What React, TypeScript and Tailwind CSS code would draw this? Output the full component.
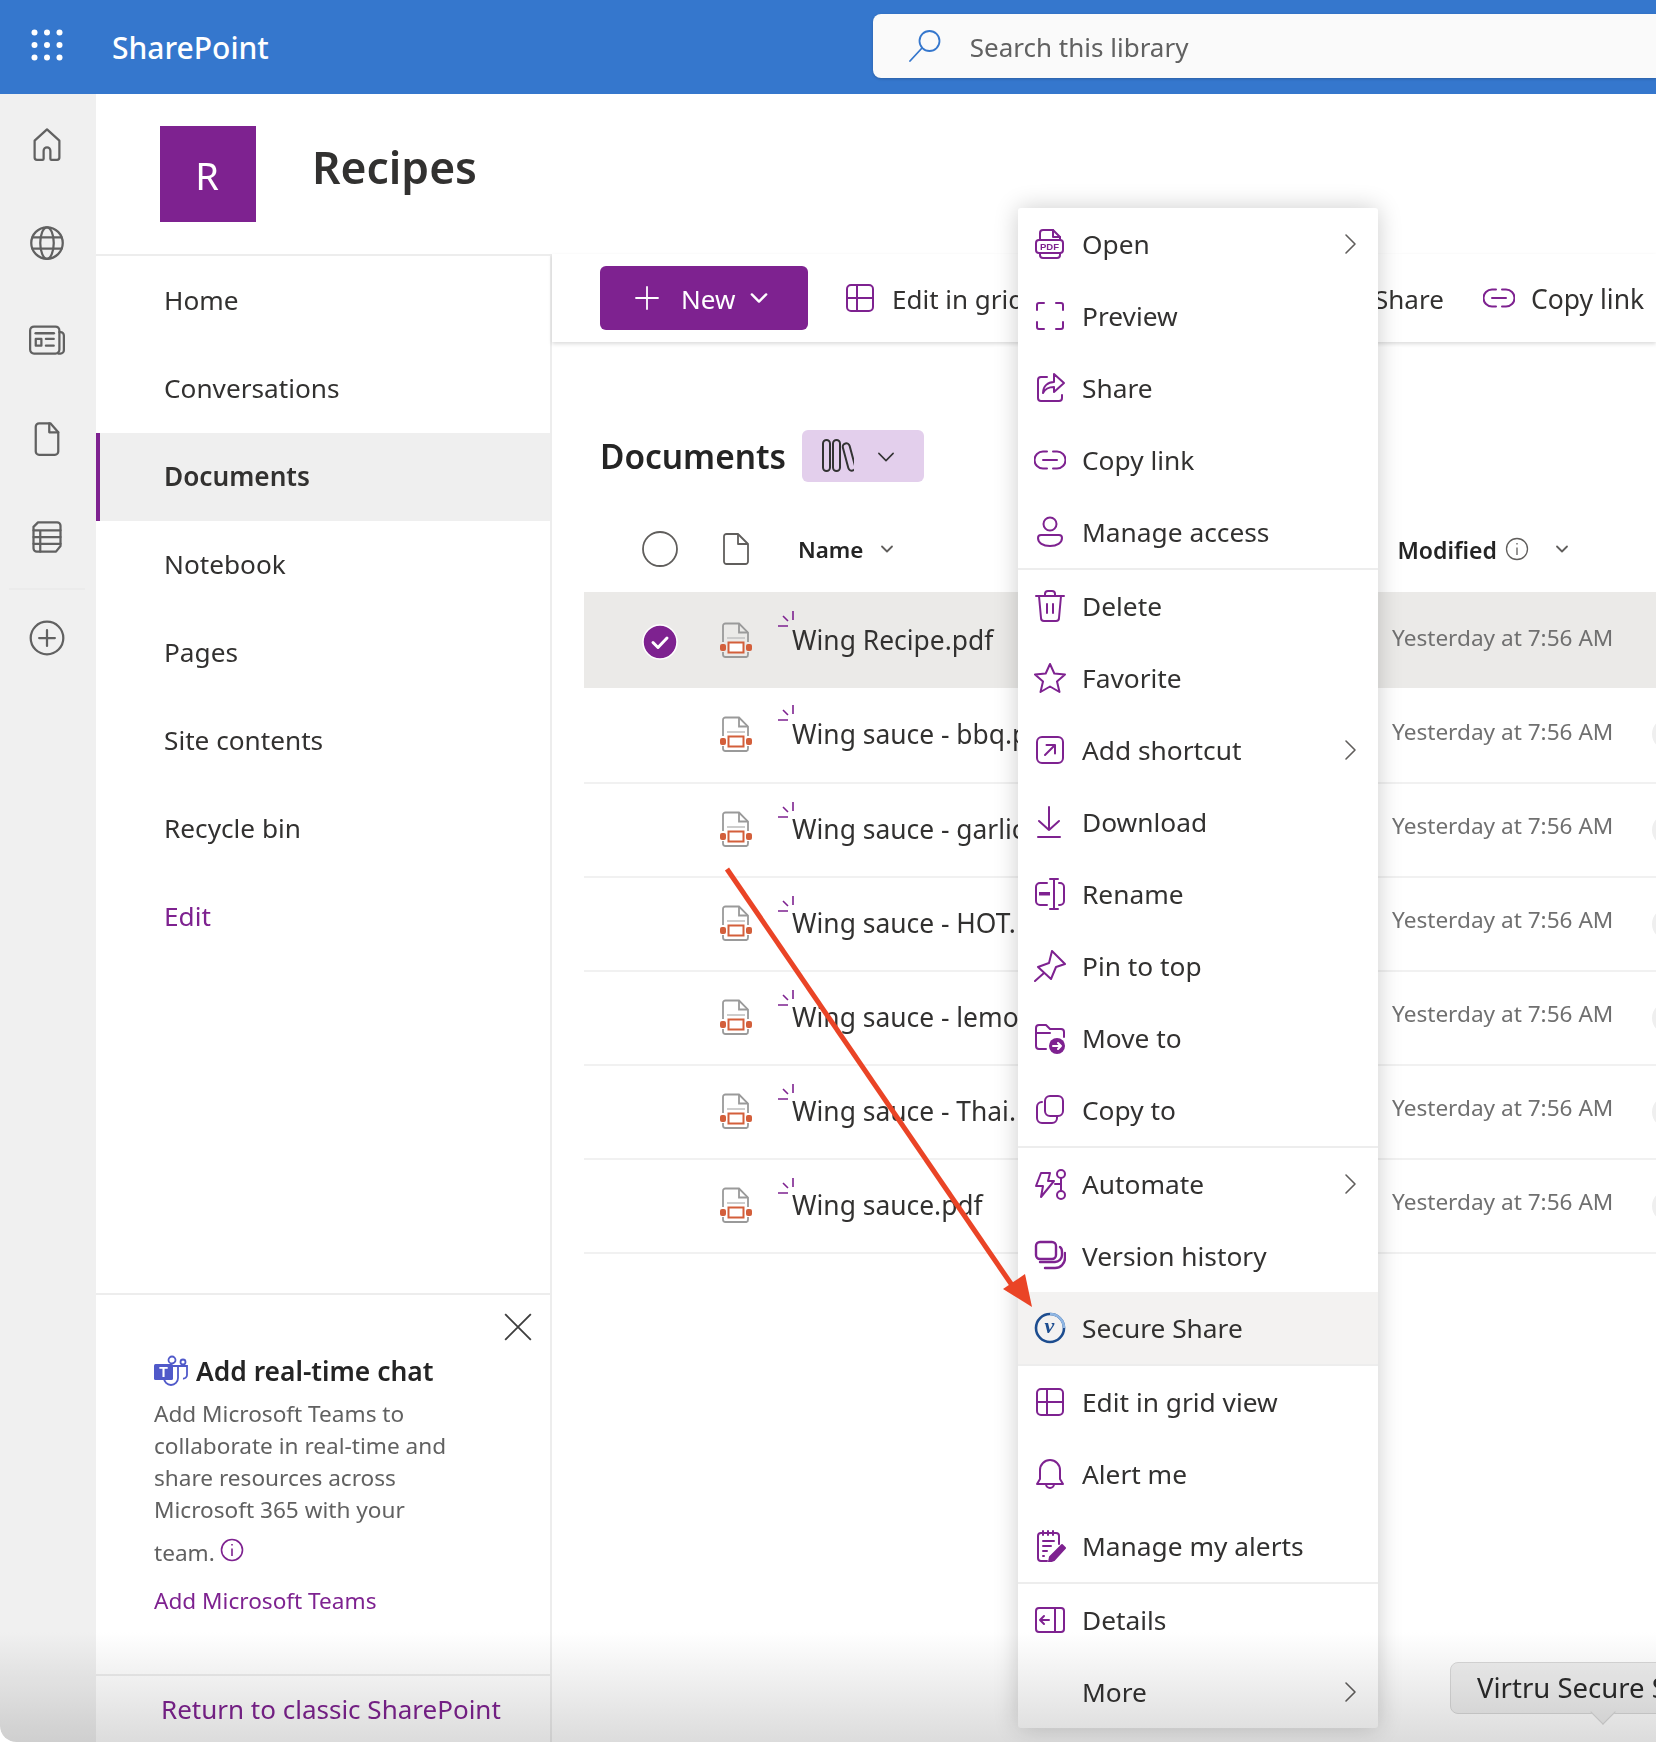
import type { ReactNode } from "react";

const purple = "#7e2290";

function Ic({ children, size = 32, className = "" }: { children: ReactNode; size?: number; className?: string }) {
  return (
    <svg width={size} height={size} viewBox="0 0 32 32" fill="none" stroke="currentColor" strokeWidth="2" strokeLinecap="round" strokeLinejoin="round" className={className}>
      {children}
    </svg>
  );
}

const LinkIcon = () => (
  <Ic>
    <path d="M13 7.5H9a8.5 8.5 0 0 0 0 17h4" />
    <path d="M19 7.5h4a8.5 8.5 0 0 1 0 17h-4" />
    <path d="M9 16h14" />
  </Ic>
);

const GridIcon = () => (
  <Ic>
    <rect x="3" y="3" width="26" height="26" rx="4" />
    <path d="M3 16h26M13 3v26" />
  </Ic>
);

const menuIcons: Record<string, ReactNode> = {
  Open: (
    <Ic>
      <path d="M6 12V5a3 3 0 0 1 3-3h10l7 7v3" />
      <path d="M19 2v7h7" />
      <rect x="2" y="12" width="27" height="13" rx="3" />
      <path d="M6 25v2a3 3 0 0 0 3 3h14a3 3 0 0 0 3-3v-2" />
      <text x="15.5" y="21.7" textAnchor="middle" fontSize="9.5" fontWeight="800" fill="currentColor" stroke="none" fontFamily="Liberation Sans">PDF</text>
    </Ic>
  ),
  Preview: (
    <Ic>
      <path d="M3 10V5a2 2 0 0 1 2-2h5M22 3h5a2 2 0 0 1 2 2v5M29 22v5a2 2 0 0 1-2 2h-5M10 29H5a2 2 0 0 1-2-2v-5" />
    </Ic>
  ),
  Share: (
    <Ic>
      <path d="M13 5H7a3 3 0 0 0-3 3v18a3 3 0 0 0 3 3h18a3 3 0 0 0 3-3v-3" />
      <path d="M20 2l10 9-10 9v-5c-5 0-9 2-11 6 0-7 5-11 11-11z" />
    </Ic>
  ),
  "Copy link": <LinkIcon />,
  "Manage access": (
    <Ic>
      <circle cx="16" cy="8" r="6.5" />
      <path d="M7 19h18a3 3 0 0 1 3 3c0 5-5 8-12 8S4 27 4 22a3 3 0 0 1 3-3z" />
    </Ic>
  ),
  Delete: (
    <Ic>
      <path d="M2 6h28M11 6V4a3 3 0 0 1 3-3h4a3 3 0 0 1 3 3v2" />
      <path d="M5 6l2 22a3 3 0 0 0 3 3h12a3 3 0 0 0 3-3l2-22" />
      <path d="M13 14v9M19 14v9" />
    </Ic>
  ),
  Favorite: (
    <Ic>
      <polygon points="16,2 20.3,11.5 31,12.5 23,19.5 25.5,30 16,24.5 6.5,30 9,19.5 1,12.5 11.7,11.5" />
    </Ic>
  ),
  "Add shortcut": (
    <Ic>
      <rect x="3" y="3" width="26" height="26" rx="5" />
      <path d="M11 21L21 11M12.5 11H21v8.5" />
    </Ic>
  ),
  Download: (
    <Ic>
      <path d="M15 1v23M5 15l10 9 10-9M4 31h22" />
    </Ic>
  ),
  Rename: (
    <Ic>
      <path d="M13 5H6a4 4 0 0 0-4 4v14a4 4 0 0 0 4 4h7M25 5h1a4 4 0 0 1 4 4v14a4 4 0 0 1-4 4h-1" />
      <path d="M20 1v30M16 1h8M16 31h8" />
      <rect x="5" y="14" width="11" height="3.5" fill="currentColor" stroke="none" />
    </Ic>
  ),
  "Pin to top": (
    <Ic>
      <path d="M18 1l13 13-9 3-5 12L4 17l11-4z" />
      <path d="M10 23L1 31" />
    </Ic>
  ),
  "Move to": (
    <Ic>
      <path d="M12 27H5a3 3 0 0 1-3-3V6a3 3 0 0 1 3-3h7l4 4h11a3 3 0 0 1 3 3v5" />
      <path d="M2 11h14" />
      <circle cx="23" cy="24" r="8" fill="currentColor" stroke="none" />
      <path d="M19 24h8M24 21l3 3-3 3" stroke="#fff" />
    </Ic>
  ),
  "Copy to": (
    <Ic>
      <rect x="11" y="2" width="18" height="20" rx="5" />
      <path d="M8 8a5 5 0 0 0-5 5v11a5 5 0 0 0 5 5h10a5 5 0 0 0 5-5v-2" />
    </Ic>
  ),
  Automate: (
    <Ic>
      <path d="M7 5h9l-2 8h6L7 29l2-11H2z" />
      <circle cx="27" cy="6" r="4" />
      <circle cx="27" cy="27" r="4" />
      <path d="M27 10v13M21 16h6" />
    </Ic>
  ),
  "Version history": (
    <Ic>
      <rect x="2" y="2" width="20" height="17" rx="4" strokeWidth="2.4" />
      <path d="M26 7c1.5 1 2 3 2 5v3a7 7 0 0 1-7 7H6" strokeWidth="2.4" />
      <path d="M31 13v5a10 10 0 0 1-10 10H11" strokeWidth="2.4" />
    </Ic>
  ),
  "Secure Share": (
    <svg width="32" height="32" viewBox="0 0 32 32" fill="none">
      <circle cx="16" cy="16" r="14" stroke="#1d4d8f" strokeWidth="2.6" />
      <path d="M16 2a14 14 0 0 1 14 14" stroke="#8fb6e3" strokeWidth="2.6" />
      <text x="15.5" y="21" textAnchor="middle" fontSize="22" fontWeight="700" fontStyle="italic" fill="#1d4d8f" fontFamily="Liberation Serif">v</text>
    </svg>
  ),
  "Edit in grid view": <GridIcon />,
  "Alert me": (
    <Ic>
      <path d="M16 2a10 10 0 0 0-10 10v9l-3 5h26l-3-5v-9A10 10 0 0 0 16 2z" />
      <path d="M12 26a4 4 0 0 0 8 0" />
    </Ic>
  ),
  "Manage my alerts": (
    <Ic>
      <path d="M13 31H7a3 3 0 0 1-3-3V6a3 3 0 0 1 3-3h15a3 3 0 0 1 3 3v8" />
      <path d="M9 1v4M14 1v4M19 1v4M9 11h11M9 16h8M9 21h4M9 26h1" />
      <path d="M28 15l3 3-11 12-5 2 1-5z" fill="currentColor" stroke="currentColor" />
    </Ic>
  ),
  Details: (
    <Ic>
      <rect x="2" y="4" width="28" height="24" rx="3" />
      <path d="M21 4v24M15 16H6M10 12l-4 4 4 4" />
    </Ic>
  ),
};

const Chevron = () => (
  <svg width="14" height="22" viewBox="0 0 14 22" fill="none" stroke="#605e5c" strokeWidth="1.6" strokeLinecap="round" strokeLinejoin="round">
    <path d="M3 2l9 9-9 9" />
  </svg>
);

const DownChevron = ({ w = 14, color = "#605e5c", sw = 1.8 }: { w?: number; color?: string; sw?: number }) => (
  <svg width={w} height={w} viewBox="0 0 14 14" fill="none" stroke={color} strokeWidth={sw} strokeLinecap="round" strokeLinejoin="round">
    <path d="M2 4.5l5 5 5-5" />
  </svg>
);

const menuSections = [
  ["Open", "Preview", "Share", "Copy link", "Manage access"],
  ["Delete", "Favorite", "Add shortcut", "Download", "Rename", "Pin to top", "Move to", "Copy to"],
  ["Automate", "Version history", "Secure Share"],
  ["Edit in grid view", "Alert me", "Manage my alerts"],
  ["Details", "More"],
];
const withChevron = ["Open", "Add shortcut", "Automate", "More"];

const navItems = ["Home", "Conversations", "Documents", "Notebook", "Pages", "Site contents", "Recycle bin", "Edit"];
const files = ["Wing Recipe.pdf", "Wing sauce - bbq.pdf", "Wing sauce - garlic.pdf", "Wing sauce - HOT.pdf", "Wing sauce - lemon.pdf", "Wing sauce - Thai.pdf", "Wing sauce.pdf"];

function PdfIcon() {
  return (
    <svg width="32" height="36" viewBox="0 0 32 36" fill="none">
      <path d="M3 20V4a2.5 2.5 0 0 1 2.5-2.5H19l9 9V20M3 30v2.5A2.5 2.5 0 0 0 5.5 35h21a2.5 2.5 0 0 0 1.5-2.5V30" stroke="#9a9a9a" strokeWidth="1.8" />
      <path d="M19 2v8.5h9" stroke="#9a9a9a" strokeWidth="1.8" />
      <path d="M7 16h18" stroke="#c8c8c8" strokeWidth="1.8" />
      <rect x="8.5" y="20.5" width="15" height="10" stroke="#d35f3b" strokeWidth="2" fill="#fff" />
      <rect x="0" y="22" width="6" height="7" rx="2" fill="#d35f3b" />
      <rect x="26" y="22" width="6" height="7" rx="2" fill="#d35f3b" />
    </svg>
  );
}

function Sparkle() {
  return (
    <svg width="16" height="16" viewBox="0 0 16 16" stroke={purple} strokeWidth="1.6" className="absolute left-[-14px] top-[-8px]">
      <path d="M0 15h10M5 5l5 5M15 0v9" />
    </svg>
  );
}

function Rail() {
  return (
    <div className="flex w-[96px] shrink-0 flex-col items-center bg-[#f0f0f0] pr-[2px] text-[#616161]">
      <div className="mt-[32px]">
        <Ic size={36}>
          <path d="M16 3L5 13v15a2 2 0 0 0 2 2h5a1 1 0 0 0 1-1v-7a3 3 0 0 1 6 0v7a1 1 0 0 0 1 1h5a2 2 0 0 0 2-2V13z" />
        </Ic>
      </div>
      <div className="mt-[63px]">
        <Ic size={36}>
          <circle cx="16" cy="16" r="14" />
          <ellipse cx="16" cy="16" rx="6" ry="14" />
          <path d="M3 11h26M3 21h26" />
        </Ic>
      </div>
      <div className="mt-[61px]">
        <Ic size={36}>
          <rect x="1" y="4" width="26" height="24" rx="3.5" />
          <path d="M27 9h1a3 3 0 0 1 3 3v13a3 3 0 0 1-3 3h-2" />
          <path d="M6 10h16" strokeWidth="2.4" />
          <rect x="6" y="15" width="5" height="6" />
          <path d="M15 15h7M15 21h7" />
        </Ic>
      </div>
      <div className="mt-[63px]">
        <Ic size={36}>
          <path d="M6 5a3 3 0 0 1 3-3h10l7 8v17a3 3 0 0 1-3 3H9a3 3 0 0 1-3-3z" />
          <path d="M18 2v8h8" />
        </Ic>
      </div>
      <div className="mt-[62px]">
        <Ic size={36}>
          <path d="M8 3h17a3 3 0 0 1 3 3v18l-4 5H7a3 3 0 0 1-3-3V7z" />
          <path d="M4 10h24M4 16h24M4 22h24M10 10v19" />
        </Ic>
      </div>
      <div className="mt-[33px] h-[2px] w-[76px] bg-[#ebebeb]" />
      <div className="mt-[30px]">
        <Ic size={36}>
          <circle cx="16" cy="16" r="14.5" />
          <path d="M16 9v14M9 16h14" />
        </Ic>
      </div>
    </div>
  );
}

function SideNav() {
  return (
    <div className="flex w-[456px] shrink-0 flex-col border-r-2 border-t-2 border-[#ededed] bg-white">
      <div className="flex flex-col pt-[1px]">
        {navItems.map((item) => (
          <div
            key={item}
            className={`flex h-[88px] items-center text-[26.2px] ${item === "Documents" ? "border-l-4 border-[#7e2290] bg-[#efefef] pl-[64px] font-semibold text-[#242424]" : "pl-[68px]"} ${item === "Edit" ? "text-[#7e2290]" : "text-[#323130]"}`}
          >
            {item}
          </div>
        ))}
      </div>
      <div className="mt-auto flex h-[449px] flex-col border-t-2 border-[#ededed]">
        <div className="relative flex-1 pl-[58px] pt-[60px]">
          <svg width="28" height="28" viewBox="0 0 24 24" stroke="#3d3d3d" strokeWidth="1.6" className="absolute right-[18px] top-[18px]">
            <path d="M1 1l22 22M23 1L1 23" />
          </svg>
          <div className="flex items-center gap-[8px]">
            <svg width="34" height="32" viewBox="0 0 34 32" fill="none">
              <circle cx="18" cy="5" r="3.5" stroke="#5059c9" strokeWidth="1.8" />
              <circle cx="29" cy="7" r="2.5" stroke="#5059c9" strokeWidth="1.8" />
              <path d="M12 11h21v9a3.5 3.5 0 0 1-4 3.5M24 11v12a7 7 0 0 1-14 0v-2" stroke="#5059c9" strokeWidth="1.8" />
              <rect x="0" y="9" width="19" height="16" rx="1.5" fill="#5059c9" />
              <text x="9.5" y="21.5" textAnchor="middle" fontSize="14" fontWeight="700" fill="#fff" fontFamily="Liberation Sans">T</text>
            </svg>
            <span className="text-[26.4px] font-semibold leading-[32px] text-[#242424]">Add real-time chat</span>
          </div>
          <div className="mt-[11px] w-[320px] text-[22.6px] leading-[32px] text-[#616161]">
            <div>Add Microsoft Teams to</div>
            <div>collaborate in real-time and</div>
            <div>share resources across</div>
            <div>Microsoft 365 with your</div>
            <div className="mt-[11px] flex items-start">
              team.
              <svg width="24" height="24" viewBox="0 0 24 24" fill="none" stroke="#7e2290" strokeWidth="1.6" className="ml-[5px] mt-[1px]">
                <circle cx="12" cy="12" r="10.5" />
                <path d="M12 10.5V18M12 6v1.5" />
              </svg>
            </div>
          </div>
          <div className="mt-[16px] text-[22.6px] leading-[32px] text-[#7e2290]">Add Microsoft Teams</div>
        </div>
        <div className="flex h-[68px] items-center border-t-2 border-[#ededed] pt-[1px] pl-[65px] text-[26px] text-[#7e2290]">Return to classic SharePoint</div>
      </div>
    </div>
  );
}

function Content() {
  return (
    <div className="flex min-w-0 flex-1 flex-col">
      <div className="relative flex h-[88px] items-center pl-[48px] text-[26px] text-[#323130] shadow-[0_2px_4px_rgba(0,0,0,0.14)]">
        <div className="flex h-[64px] w-[208px] items-center rounded-[6px] bg-[#7e2290] pl-[34px] text-white">
          <svg width="26" height="26" viewBox="0 0 26 26" stroke="#fff" strokeWidth="1.8" strokeLinecap="round">
            <path d="M13 2v22M2 13h22" />
          </svg>
          <span className="ml-[21px] pt-[2px]">New</span>
          <span className="ml-[14px]"><DownChevron w={20} color="#fff" sw={1.7} /></span>
        </div>
        <span className="ml-[36px] text-[#7e2290]"><GridIcon /></span>
        <span className="ml-[16px] w-[482px] whitespace-nowrap pt-[2px]">Edit in grid view</span>
        <span className="w-[109px] pt-[2px]">Share</span>
        <span className="text-[#7e2290]"><LinkIcon /></span>
        <span className="ml-[16px] whitespace-nowrap pt-[3px] text-[26.5px]">Copy link</span>
      </div>
      <div className="mt-[88px] flex h-[52px] items-center pl-[48px]">
        <span className="text-[33.4px] font-semibold text-[#242424]">Documents</span>
        <div className="ml-[16px] flex h-[52px] w-[122px] items-center rounded-[6px] bg-[#e3cfec] pl-[20px] text-[#333]">
          <svg width="32" height="34" viewBox="0 0 32 34" fill="none" stroke="currentColor" strokeWidth="2">
            <rect x="1" y="1" width="7" height="31" rx="3.5" />
            <rect x="11" y="1" width="7" height="31" rx="3.5" />
            <rect x="23.5" y="4" width="7" height="28" rx="3.5" transform="rotate(-15 27 18)" />
          </svg>
          <span className="ml-[22px] pt-[2px]"><DownChevron w={20} color="#333" sw={1.1} /></span>
        </div>
      </div>
      <div className="mt-[24px] flex h-[86px] items-center pl-[90px] text-[#242424]">
        <svg width="36" height="36" viewBox="0 0 36 36" fill="none" stroke="#605e5c" strokeWidth="1.8"><circle cx="18" cy="18" r="17" /></svg>
        <svg width="26" height="32" viewBox="0 0 26 32" fill="none" stroke="#605e5c" strokeWidth="1.8" strokeLinejoin="round" className="ml-[45px]">
          <path d="M1 3.5A2.5 2.5 0 0 1 3.5 1H15l10 10v17.5a2.5 2.5 0 0 1-2.5 2.5h-19A2.5 2.5 0 0 1 1 28.5z" />
          <path d="M15 1v10h10" />
        </svg>
        <span className="ml-[49px] pt-[2px] text-[22.4px] font-semibold">Name</span>
        <span className="ml-[17px]"><DownChevron /></span>
        <span className="ml-[503px] pt-[2px] text-[23px] font-semibold">Modified</span>
        <svg width="24" height="24" viewBox="0 0 24 24" fill="none" stroke="#605e5c" strokeWidth="1.3" className="ml-[8px]">
          <circle cx="12" cy="12" r="10.5" />
          <path d="M12 10.5V18M12 6v1.5" />
        </svg>
        <span className="ml-[26px]"><DownChevron /></span>
      </div>
      <div className="flex flex-col">
        {files.map((f, i) => (
          <div key={f} className={`ml-[32px] flex items-center pl-[59px] ${i === 0 ? "h-[96px] bg-[#ebeae8]" : i === 1 ? "relative h-[96px] border-b-2 border-[#f1f1f1] pb-[2px]" : "relative h-[94px] border-b-2 border-[#f1f1f1]"}`}>
            <div className="w-[34px] shrink-0">
              {i === 0 && (
                <svg width="36" height="36" viewBox="0 0 36 36" className="ml-[-1px] mt-[4px]">
                  <circle cx="18" cy="18" r="17" fill="#7e2290" stroke="#fff" strokeWidth="1.5" />
                  <path d="M11 18.5l5 5 9-9.5" fill="none" stroke="#fff" strokeWidth="3" strokeLinecap="round" strokeLinejoin="round" />
                </svg>
              )}
            </div>
            <div className={`ml-[43px] shrink-0 ${i > 1 ? "mt-[-3px]" : ""}`}><PdfIcon /></div>
            <div className={`relative ml-[40px] w-[600px] shrink-0 whitespace-nowrap text-[26.4px] text-[#323130] ${i < 2 ? "pt-[2px]" : ""}`}>
              <Sparkle />
              {f}
            </div>
            <span className={`whitespace-nowrap text-[22.6px] text-[#707070] ${i < 2 ? "mt-[-4px]" : "mt-[-8px]"}`}>Yesterday at 7:56 AM</span>
            {i > 0 && <div className="absolute right-[-32px] h-[32px] w-[36px] rounded-full bg-[#efefef]" />}
          </div>
        ))}
      </div>
    </div>
  );
}

function ContextMenu() {
  return (
    <div className="absolute left-[1018px] top-[208px] flex w-[360px] flex-col rounded-[3px] bg-white shadow-[0_0_24px_rgba(0,0,0,0.2)]">
      {menuSections.map((section, s) => (
        <div key={s} className={s > 0 ? "border-t-2 border-[#ededed]" : ""}>
          {section.map((item) => (
            <div key={item} className={`flex h-[72px] items-center text-[26.3px] text-[#323130] ${item === "Secure Share" ? "bg-[#f3f2f1]" : ""}`}>
              <span className="ml-[16px] flex h-[32px] w-[32px] shrink-0 items-center justify-center text-[#7e2290]">{menuIcons[item]}</span>
              <span className="ml-[16px] pt-[2px]">{item}</span>
              {withChevron.includes(item) && <span className="ml-auto mr-[21px]"><Chevron /></span>}
            </div>
          ))}
        </div>
      ))}
    </div>
  );
}

export default function App() {
  return (
    <div className="relative flex h-[1742px] w-[1656px] flex-col overflow-hidden rounded-bl-[16px] bg-white font-['Noto_Sans',sans-serif]">
      <div className="flex h-[94px] shrink-0 items-center bg-[#3577cd] text-white">
        <svg width="32" height="32" viewBox="0 0 32 32" fill="#fff" className="mb-[4px] ml-[31px]">
          {[3.5, 16, 28.5].flatMap((y) =>
            [3.5, 16, 28.5].map((x) => <circle key={`${x}-${y}`} cx={x} cy={y} r="3" />)
          )}
        </svg>
        <span className="ml-[49px] text-[30px] font-medium">SharePoint</span>
        <div className="mb-[2px] ml-[604px] flex h-[64px] flex-1 items-center rounded-l-[8px] bg-[#fafafa] pl-[36px] shadow-[0_1px_3px_rgba(0,0,0,0.2)]">
          <svg width="32" height="32" viewBox="0 0 32 32" fill="none" stroke="#3577cd" strokeWidth="1.8" strokeLinecap="round">
            <circle cx="20.5" cy="11" r="10" />
            <path d="M13 18L1 31" />
          </svg>
          <span className="ml-[29px] pt-[3px] text-[26px] text-[#616161]">Search this library</span>
        </div>
      </div>
      <div className="flex min-h-0 flex-1">
        <Rail />
        <div className="flex min-w-0 flex-1 flex-col">
          <div className="flex h-[160px] shrink-0 pl-[64px] pt-[32px]">
            <div className="flex h-[96px] w-[96px] items-center justify-center bg-[#7e2290] pr-[2px] pt-[3px] text-[38px] text-white">R</div>
            <span className="ml-[56px] text-[44.4px] font-semibold leading-[82px] text-[#323130]">Recipes</span>
          </div>
          <div className="flex min-h-0 flex-1">
            <SideNav />
            <Content />
          </div>
        </div>
      </div>

      <ContextMenu />

      {/* annotation arrow drawn on the screenshot */}
      <svg width="330" height="460" viewBox="0 0 330 460" className="absolute left-[715px] top-[860px]">
        <path d="M12 9L301 431" stroke="#ea4426" strokeWidth="5" />
        <polygon points="317,447 288,429 310,414" fill="#ea4426" />
      </svg>

      <div className="absolute left-[1450px] top-[1662px] flex h-[52px] w-[240px] items-center rounded-[8px] border border-[#d8d8d8] bg-[#efefef] pl-[26px] text-[27.5px] text-[#2a2a2a]">
        <span className="whitespace-nowrap">Virtru Secure Share</span>
        <div className="absolute left-[143px] top-[40px] h-[18px] w-[18px] rotate-45 border-b border-r border-[#d8d8d8] bg-[#efefef]" />
      </div>

      <div className="pointer-events-none absolute bottom-0 left-0 right-0 h-[110px] bg-gradient-to-b from-white to-[#dcdcdc] mix-blend-multiply" />
    </div>
  );
}
